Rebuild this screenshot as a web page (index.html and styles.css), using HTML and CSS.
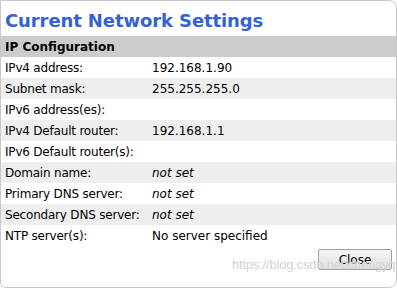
FILE: index.html
```html
<!DOCTYPE html>
<html>
    <head>
        <meta charset="UTF-8">
        <title>Current Network Settings</title>
        <link rel="stylesheet" href="styles.css">
    </head>
    <body>
        <div id="dialog">
            <h1 class="title">Current Network Settings</h1>
            <table class="info">
                <tr class="head"><th colspan="2">IP Configuration</th></tr>
                <tr><td class="key">IPv4 address:</td><td>192.168.1.90</td></tr>
                <tr class="alt"><td class="key">Subnet mask:</td><td>255.255.255.0</td></tr>
                <tr><td class="key">IPv6 address(es):</td><td></td></tr>
                <tr class="alt"><td class="key">IPv4 Default router:</td><td>192.168.1.1</td></tr>
                <tr><td class="key">IPv6 Default router(s):</td><td></td></tr>
                <tr class="alt"><td class="key">Domain name:</td><td><i>not set</i></td></tr>
                <tr><td class="key">Primary DNS server:</td><td><i>not set</i></td></tr>
                <tr class="alt"><td class="key">Secondary DNS server:</td><td><i>not set</i></td></tr>
                <tr><td class="key">NTP server(s):</td><td>No server specified</td></tr>
            </table>
            <div class="foot">
                <button class="close">Close</button>
            </div>
            <div class="mark">https://blog.csdn.net/chengyq116</div>
        </div>
    </body>
</html>
```

FILE: styles.css
```css
*{ margin:0; padding:0; box-sizing:border-box;}
body{ font-family:"DejaVu Sans",Verdana,sans-serif; font-size:12px; color:#000; background:#fff;}
#dialog{
    position: relative;
    width: 397px;
    height: 288px;
    border: 1px solid #c8c8c8;
    border-radius: 0 8px 8px 6px;
    overflow: hidden;
}
#dialog .title{
    height: 35px;
    padding: 9px 0 0 4px;
    font-size: 18px;
    font-weight: bold;
    color: #3562d1;
    letter-spacing: -0.1px;
}
#dialog .info{
    width: 100%;
    border-collapse: collapse;
}
#dialog .info th{
    height: 21px;
    padding: 0 4px;
    text-align: left;
    background: #cccccc;
    font-weight: bold;
}
#dialog .info td{
    height: 21px;
    padding: 0 4px;
    white-space: nowrap;
}
#dialog .info td.key{
    width: 147px;
    padding-right: 0;
    letter-spacing: -0.2px;
}
#dialog .info tr.alt td{
    background: #eeeeee;
}
#dialog .foot{
    display: flex;
    justify-content: flex-end;
    padding: 3px 4px 0 0;
}
#dialog .close{
    width: 74px;
    height: 21px;
    font-family: "DejaVu Sans",Verdana,sans-serif;
    font-size: 12px;
    color: #000;
    border: 1px solid #a0a0a0;
    border-radius: 2px;
    background: linear-gradient(#f6f6f6,#dddddd);
}
#dialog .mark{
    position: absolute;
    z-index: 1;
    left: 231px;
    top: 256px;
    font-family: "Liberation Sans",Arial,sans-serif;
    font-size: 13px;
    letter-spacing: -0.2px;
    color: rgba(200,200,200,.85);
    text-shadow: 0 0 1px rgba(255,255,255,.9);
    white-space: nowrap;
}
```
